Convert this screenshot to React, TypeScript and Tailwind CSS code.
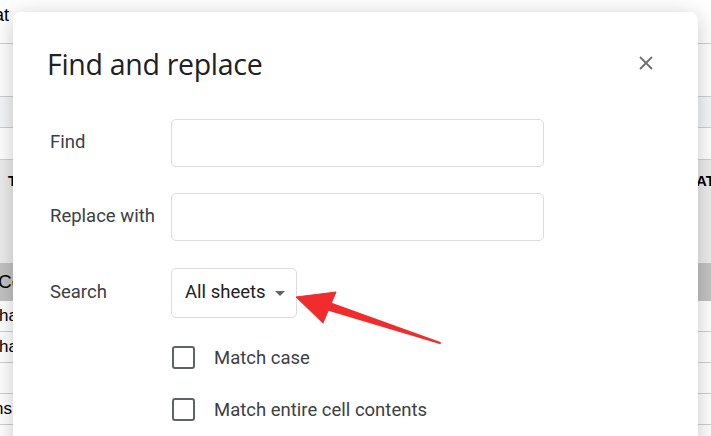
import React from "react";

function BgRow({ h, cls = "", left = "", right = "", leftCls = "", rightCls = "" }: { h: string; cls?: string; left?: string; right?: string; leftCls?: string; rightCls?: string }) {
  return (
    <div className={`flex items-center justify-between border-b border-[#d0d0d0] ${h} ${cls}`}>
      <span className={`whitespace-nowrap ${leftCls}`}>{left}</span>
      <span className={`whitespace-nowrap ${rightCls}`}>{right}</span>
    </div>
  );
}

export default function App() {
  return (
    <div className="relative w-[711px] h-[436px] overflow-hidden bg-white font-['Liberation_Sans',Arial,sans-serif] text-black">
      {/* background sheet */}
      <div className="flex flex-col">
        <div className="h-[44px] border-b border-[#d0d0d0] flex items-start pt-[2px] text-[18px] -ml-[6px]">at</div>
        <BgRow h="h-[53px]" />
        <BgRow h="h-[31px]" cls="bg-[#f5f6f7]" />
        <BgRow h="h-[32px]" />
        <div className="h-[103px] bg-[#ececec] flex items-start justify-between pt-[10px] text-[15px] font-bold">
          <span className="ml-[8px]">T</span>
          <span className="-mr-[8px]">ATI</span>
        </div>
        <div className="h-[38px] bg-[#c3c3c3] flex items-center text-[19px] -ml-[2px]">Co</div>
        <BgRow h="h-[31px]" left="ha" leftCls="text-[17px] -ml-[1px]" />
        <BgRow h="h-[31px]" left="ha" leftCls="text-[17px] -ml-[1px]" />
        <BgRow h="h-[31px]" />
        <BgRow h="h-[31px]" left="ns" leftCls="text-[17px] -ml-[6px]" />
      </div>

      {/* dialog */}
      <div className="absolute left-[13px] top-[12px] w-[685px] h-[460px] bg-white rounded-[8px] shadow-[0_4px_22px_rgba(0,0,0,0.22)] font-['Roboto',Arial,sans-serif]">
        <div className="flex items-center justify-between pl-[34px] pr-[44px] pt-[34px]">
          <h1 className="text-[28.5px] leading-[36px] text-[#202124] font-['Open_Sans',Roboto,sans-serif] tracking-[-0.3px]">Find and replace</h1>
          <svg width="16" height="16" viewBox="0 0 16 16" className="mt-[-2px]">
            <path d="M2 2 L14 14 M14 2 L2 14" stroke="#707070" strokeWidth="1.8" />
          </svg>
        </div>

        <div className="flex flex-col pl-[37px] pt-[37px] text-[18.5px] text-[#3c4043]">
          <div className="flex items-center h-[48px]">
            <span className="w-[121px]">Find</span>
            <div className="w-[373px] h-[48px] border border-[#dadce0] rounded-[5px]" />
          </div>
          <div className="flex items-center h-[48px] mt-[26px]">
            <span className="w-[121px]">Replace with</span>
            <div className="w-[373px] h-[48px] border border-[#dadce0] rounded-[5px]" />
          </div>
          <div className="flex items-center h-[50px] mt-[27px]">
            <span className="w-[121px]">Search</span>
            <div className="w-[126px] h-[50px] border border-[#dadce0] rounded-[5px] flex items-center pl-[13px] text-[#202124]">
              <span>All sheets</span>
              <svg width="10" height="5" viewBox="0 0 10 5" className="ml-[9px]">
                <path d="M0 0 L10 0 L5 5 Z" fill="#5f6368" />
              </svg>
            </div>
          </div>
          <div className="flex items-center mt-[27px] ml-[122px] h-[24px]">
            <div className="w-[23px] h-[23px] border-2 border-[#5f6368] rounded-[3px]" />
            <span className="ml-[19px] mt-[4px]">Match case</span>
          </div>
          <div className="flex items-center mt-[28px] ml-[122px] h-[24px]">
            <div className="w-[23px] h-[23px] border-2 border-[#5f6368] rounded-[3px]" />
            <span className="ml-[19px] mt-[4px]">Match entire cell contents</span>
          </div>
        </div>
      </div>

      {/* red arrow annotation */}
      <svg className="absolute left-0 top-0" width="711" height="436" viewBox="0 0 711 436">
        <path d="M440 343 L321 300 L316 306 Z" fill="#f12c2c" stroke="#f12c2c" strokeWidth="2" strokeLinejoin="round" />
        <path d="M296 297 L336 292 L323 323 Z" fill="#f12c2c" stroke="#f12c2c" strokeWidth="1" strokeLinejoin="round" />
      </svg>
    </div>
  );
}
